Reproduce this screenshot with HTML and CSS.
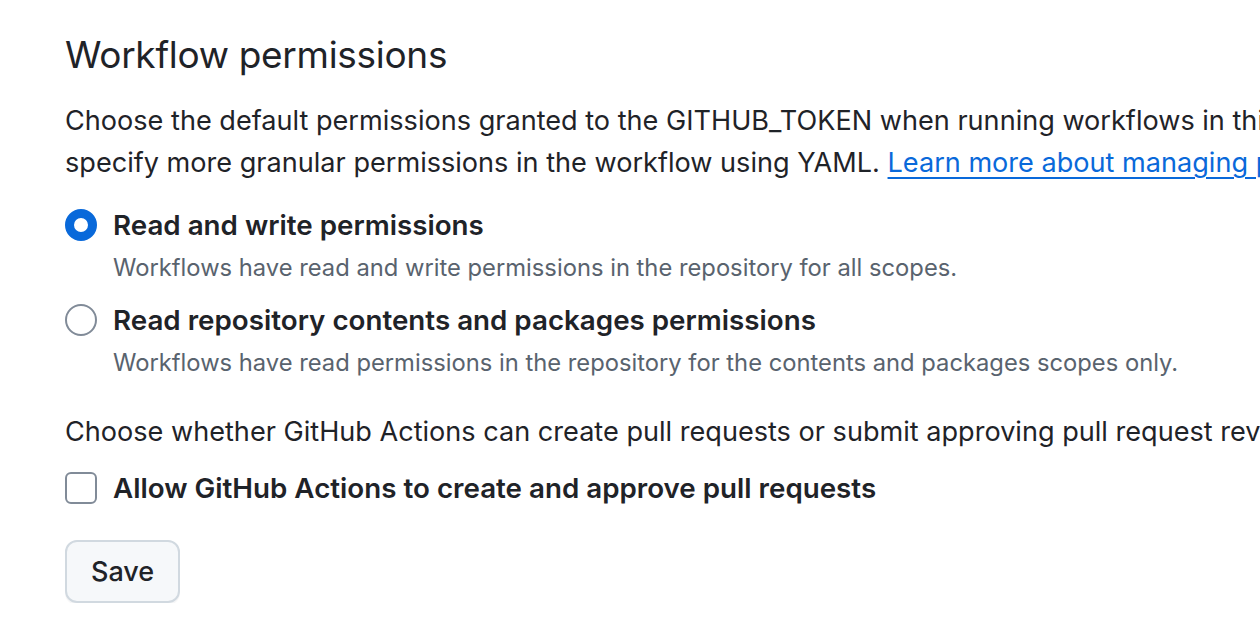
FILE: index.html
```html
<!DOCTYPE html>
<html>
<head>
<meta charset="utf-8">
<link rel="stylesheet" href="styles.css">
</head>
<body>
<div class="page">
  <h2 class="title">Workflow permissions</h2>
  <p class="para">
    <span class="line">Choose the default permissions granted to the GITHUB_TOKEN when running workflows in this repository. You can</span>
    <span class="line">specify more granular permissions in the workflow using YAML. <a class="link" href="#">Learn more about managing permissions.</a></span>
  </p>
  <div class="option first">
    <span class="radio checked"></span>
    <div class="option-body">
      <div class="label">Read and write permissions</div>
      <div class="note">Workflows have read and write permissions in the repository for all scopes.</div>
    </div>
  </div>
  <div class="option second">
    <span class="radio"></span>
    <div class="option-body">
      <div class="label">Read repository contents and packages permissions</div>
      <div class="note">Workflows have read permissions in the repository for the contents and packages scopes only.</div>
    </div>
  </div>
  <p class="para para2"><span class="line">Choose whether GitHub Actions can create pull requests or submit approving pull request reviews.</span></p>
  <div class="option check-row">
    <span class="checkbox"></span>
    <div class="label">Allow GitHub Actions to create and approve pull requests</div>
  </div>
  <button class="btn">Save</button>
</div>
</body>
</html>
```
FILE: styles.css
```css
html, body {
  margin: 0;
  padding: 0;
  background: #ffffff;
  overflow: hidden;
}
body {
  width: 1260px;
  height: 644px;
  font-family: Inter, "Noto Sans", sans-serif;
  color: #1f2328;
}
.page {
  padding: 30px 0 0 65px;
  white-space: nowrap;
  width: 1195px;
  overflow: hidden;
}
.title {
  margin: 0;
  font-size: 37px;
  font-weight: 400;
  line-height: 50px;
  letter-spacing: -0.3px;
}
.para {
  margin: 20px 0 0 0;
  font-size: 27.1px;
  line-height: 42px;
}
.line {
  display: block;
}
.link {
  color: #0969da;
  text-decoration: underline;
  text-underline-offset: 5px;
  text-decoration-thickness: 2px;
}
.option {
  display: flex;
  align-items: flex-start;
  gap: 16px;
}
.first {
  margin-top: 20px;
}
.second {
  margin-top: 13px;
}
.radio {
  flex: none;
  width: 32px;
  height: 32px;
  box-sizing: border-box;
  border-radius: 50%;
  border: 2px solid #818b98;
  background: #fff;
  margin-top: 5px;
}
.radio.checked {
  border: 9px solid #0969da;
}
.label {
  font-size: 27.75px;
  font-weight: 600;
  line-height: 42px;
}
.note {
  margin-top: 4px;
  font-size: 23.75px;
  line-height: 36px;
  color: #59636e;
}
.para2 {
  margin-top: 30px;
}
.check-row {
  margin-top: 14px;
}
.checkbox {
  flex: none;
  width: 32px;
  height: 32px;
  box-sizing: border-box;
  border-radius: 6px;
  border: 2px solid #818b98;
  background: #fff;
  margin-top: 5px;
}
.btn {
  display: block;
  margin-top: 31px;
  height: 63px;
  padding: 0 24px;
  box-sizing: border-box;
  background: #f6f8fa;
  border: 2px solid #d1d9e0;
  border-radius: 12px;
  font-family: Inter, "Noto Sans", sans-serif;
  font-size: 27px;
  font-weight: 500;
  color: #1f2328;
  box-shadow: 0 2px 0 rgba(31,35,40,0.04);
}
```
